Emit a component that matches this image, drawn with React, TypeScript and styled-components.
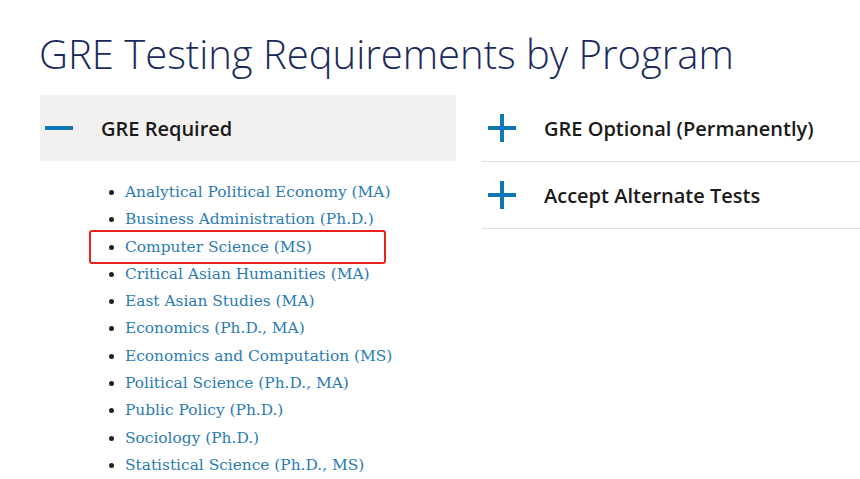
import styled, { createGlobalStyle } from 'styled-components';

const GlobalStyle = createGlobalStyle`
  html, body {
    margin: 0;
    padding: 0;
    background: #ffffff;
  }
  body {
    font-family: "Open Sans", "Liberation Sans", sans-serif;
  }
`;

const requiredPrograms = [
  { id: 1, text: 'Analytical Political Economy (MA)' },
  { id: 2, text: 'Business Administration (Ph.D.)' },
  { id: 3, text: 'Computer Science (MS)', marked: true },
  { id: 4, text: 'Critical Asian Humanities (MA)' },
  { id: 5, text: 'East Asian Studies (MA)' },
  { id: 6, text: 'Economics (Ph.D., MA)' },
  { id: 7, text: 'Economics and Computation (MS)' },
  { id: 8, text: 'Political Science (Ph.D., MA)' },
  { id: 9, text: 'Public Policy (Ph.D.)' },
  { id: 10, text: 'Sociology (Ph.D.)' },
  { id: 11, text: 'Statistical Science (Ph.D., MS)' },
];

const closedSections = [
  { id: 1, text: 'GRE Optional (Permanently)' },
  { id: 2, text: 'Accept Alternate Tests' },
];

function ToggleIcon({ open }: { open: boolean }) {
  return (
    <svg width="28" height="28" viewBox="0 0 28 28">
      <rect x="0" y="12" width="28" height="4" fill="#0e77b5" />
      {!open && <rect x="12" y="0" width="4" height="28" fill="#0e77b5" />}
    </svg>
  );
}

function App() {
  const programList = requiredPrograms.map((program) => (
    <Program key={program.id}>
      <a href="#">{program.text}</a>
      {program.marked && <Marker />}
    </Program>
  ));

  const sectionList = closedSections.map((section) => (
    <AccordionHeader key={section.id} $open={false}>
      <ToggleIcon open={false} />
      <span>{section.text}</span>
    </AccordionHeader>
  ));

  return (
    <Page>
      <GlobalStyle />
      <Title>GRE Testing Requirements by Program</Title>
      <Columns>
        <Column>
          <AccordionHeader $open>
            <ToggleIcon open />
            <span>GRE Required</span>
          </AccordionHeader>
          <ProgramList>{programList}</ProgramList>
        </Column>
        <Column>{sectionList}</Column>
      </Columns>
    </Page>
  );
}

const Page = styled.div`
  padding: 24px 0 0 40px;
  width: 820px;
  overflow: hidden;
`;

const Title = styled.h1`
  margin: 0 0 11px -1px;
  font-family: "Open Sans", "Liberation Sans", sans-serif;
  font-weight: 300;
  font-size: 40px;
  line-height: 60px;
  color: #1b2a5c;
`;

const Columns = styled.div`
  display: grid;
  grid-template-columns: 416px 400px;
  column-gap: 26px;
`;

const Column = styled.div`
  display: flex;
  flex-direction: column;
`;

const AccordionHeader = styled.div<{ $open: boolean }>`
  display: flex;
  align-items: center;
  gap: 28px;
  height: 66px;
  padding-left: ${(p) => (p.$open ? '5px' : '6px')};
  background: ${(p) => (p.$open ? '#f2f1ef' : 'transparent')};
  border-bottom: ${(p) => (p.$open ? 'none' : '1px solid #e2e2e2')};

  span {
    font-family: "Open Sans", "Liberation Sans", sans-serif;
    font-weight: 600;
    font-size: 20px;
    color: #1a1a1a;
  }
`;

const ProgramList = styled.ul`
  margin: 18px 0 0 0;
  padding: 0 0 0 85px;
  font-family: "DejaVu Serif", "Liberation Serif", serif;
  font-size: 15.4px;
  line-height: 27.3px;
  color: #222;
`;

const Program = styled.li`
  position: relative;

  a {
    color: #2b7bb3;
    text-decoration: none;
  }
`;

const Marker = styled.div`
  position: absolute;
  left: -36px;
  top: -4px;
  width: 293px;
  height: 30px;
  border: 2px solid #e8231f;
  border-radius: 3px;
  pointer-events: none;
`;

export default App;
